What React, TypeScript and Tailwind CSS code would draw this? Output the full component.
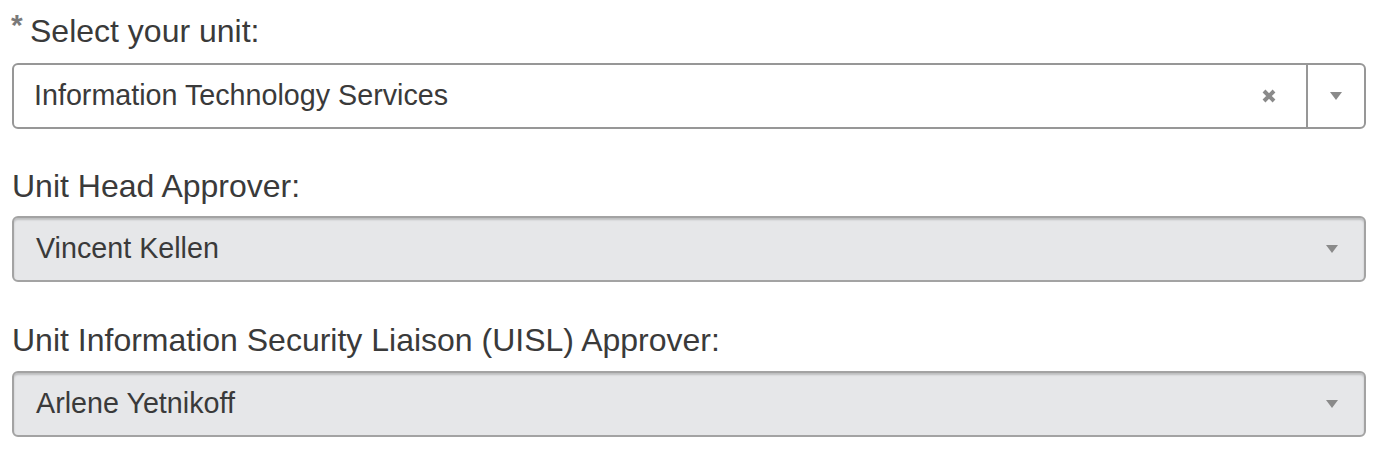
import React from "react";

function Arrow() {
  return (
    <svg width="12" height="8" viewBox="0 0 12 8" className="block">
      <path d="M0 0 L12 0 L6 8 Z" fill="#8a8a8a" />
    </svg>
  );
}

function ClearX() {
  return (
    <svg width="16" height="16" viewBox="0 0 16 16" className="block">
      <path d="M3 3 L13 13 M13 3 L3 13" stroke="#8a8a8a" strokeWidth="4" strokeLinecap="butt" />
    </svg>
  );
}

function DisabledSelect({ value }: { value: string }) {
  return (
    <div className="flex h-[66px] items-center rounded-[6px] border-2 border-[#a3a3a3] bg-[#e6e7e9] pl-[22px] pr-[26px] shadow-[inset_0_2px_2px_rgba(0,0,0,0.18)]">
      <span className="flex-1 text-[28.7px] text-[#3a3a3a]">{value}</span>
      <Arrow />
    </div>
  );
}

export default function App() {
  return (
    <div
      className="flex flex-col bg-white px-[12px] pt-[8px] text-[#333]"
      style={{ fontFamily: '"Liberation Sans", Arial, sans-serif' }}
    >
      <label className="relative pl-[18px] text-[32px] leading-[46px] text-[#3a3a3a]">
        <span className="absolute left-[-1px] top-[2px] text-[30px] font-bold leading-none text-[#7a7a7a]">*</span>
        Select your unit:
      </label>
      <div className="mt-[9px] flex h-[66px] items-stretch rounded-[6px] border-2 border-[#979797] bg-white">
        <div className="flex flex-1 items-center pl-[20px] pr-[29px]">
          <span className="flex-1 text-[28.7px] text-[#3a3a3a]">Information Technology Services</span>
          <ClearX />
        </div>
        <div className="flex w-[58px] items-center justify-center border-l-2 border-[#979797]">
          <Arrow />
        </div>
      </div>

      <label className="mt-[34px] text-[32px] leading-[46px] text-[#3a3a3a]">Unit Head Approver:</label>
      <div className="mt-[7px]">
        <DisabledSelect value="Vincent Kellen" />
      </div>

      <label className="mt-[35px] text-[32px] leading-[46px] text-[#3a3a3a]">
        Unit Information Security Liaison (UISL) Approver:
      </label>
      <div className="mt-[8px]">
        <DisabledSelect value="Arlene Yetnikoff" />
      </div>
    </div>
  );
}
